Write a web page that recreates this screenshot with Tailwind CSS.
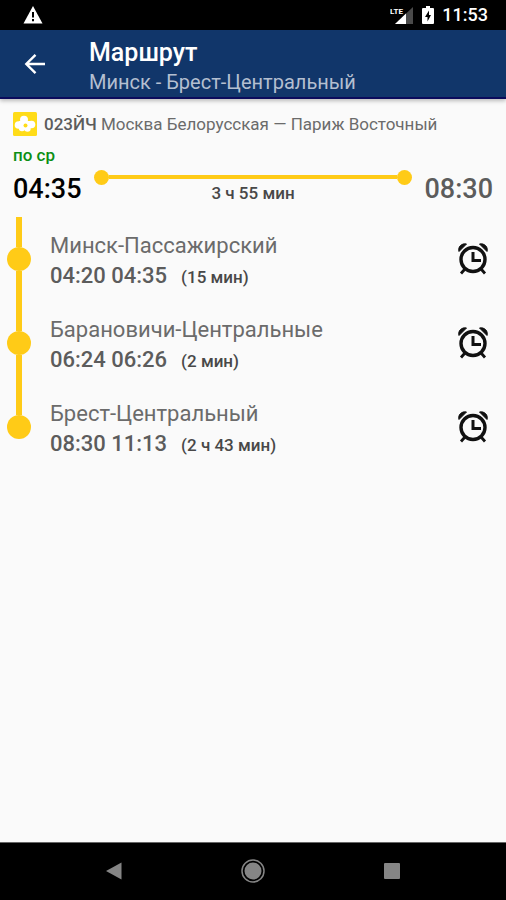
<!DOCTYPE html>
<html lang="ru">

<head>
  <meta charset="UTF-8">
  <meta name="viewport" content="width=device-width, initial-scale=1.0">
  <title>Маршрут</title>
  <script src="https://cdn.jsdelivr.net/npm/@tailwindcss/browser@4"></script>
</head>

<body class="min-h-screen flex flex-col bg-[#fafafa] font-[Roboto,sans-serif] text-[#5c5c5c]">
  <!-- Status bar -->
  <div class="h-[30px] bg-black text-white flex items-center pl-[23px] pr-[18px]">
    <svg class="w-5 h-[18px]" viewBox="0 0 20 18" aria-hidden="true">
      <path d="M10 0L19.500 17.500H.5z" fill="#fff" />
      <path d="M9 6h2v5.500H9zM9 13h2v2.200H9z" fill="#000" />
    </svg>
    <div class="ml-auto flex items-center">
      <svg class="w-6 h-5" viewBox="0 0 24 20" aria-label="LTE">
        <path d="M23 2V19H5z" fill="#4a4a4a" />
        <path d="M16 8.600V19H5z" fill="#fff" />
        <text x="0" y="9" font-size="8" font-weight="700" fill="#fff" stroke="#000" stroke-width="2" paint-order="stroke">LTE</text>
      </svg>
      <svg class="w-3 h-5 ml-2" viewBox="0 0 12 20" aria-hidden="true">
        <path d="M4 1h4v2h3a1 1 0 0 1 1 1v14a1 1 0 0 1-1 1H1a1 1 0 0 1-1-1V4a1 1 0 0 1 1-1h3z" fill="#fff" />
        <path d="M7 5.500L3 12h2.500v4.500L9 10H7z" fill="#000" />
      </svg>
      <span class="ml-2 text-lg leading-[30px] font-medium">11:53</span>
    </div>
  </div>

  <!-- App bar -->
  <header class="relative h-[69px] bg-[#11366a] border-b-2 border-[#0b0b5c] shadow-[0_2px_4px_rgba(0,0,0,0.25)] flex items-center pl-6">
    <button type="button" aria-label="Назад" class="mr-[43px]">
      <svg class="block w-[22px] h-[22px]" viewBox="0 0 22 22" fill="none" stroke="#fff" stroke-width="2.400">
        <path d="M21 11H3M11.500 1.800L2.300 11l9.200 9.200" />
      </svg>
    </button>
    <div class="pt-1.5">
      <h1 class="text-[25px] leading-[30px] font-medium text-white">Маршрут</h1>
      <p class="text-xl leading-7 text-[#b4bfd0]">Минск - Брест-Центральный</p>
    </div>
  </header>

  <main class="flex-1">
    <!-- Train summary -->
    <section class="px-[13px] pt-[13px]">
      <div class="flex items-center h-6">
        <svg class="w-6 h-6 mr-[7px]" viewBox="0 0 24 24" aria-hidden="true">
          <rect width="24" height="24" rx="1.500" fill="#ffdc18" />
          <g fill="#fff">
            <circle cx="11" cy="7.800" r="4" />
            <circle cx="5.500" cy="13" r="3.800" />
            <circle cx="18.500" cy="12.500" r="3.800" />
            <circle cx="9" cy="16" r="3.200" />
            <circle cx="14.500" cy="16.500" r="3.200" />
            <path d="M6 9h11v7H6z" />
          </g>
          <circle cx="12.500" cy="13.500" r="2" fill="#ffdc18" />
        </svg>
        <p class="text-[17px] leading-6 whitespace-nowrap text-[#6b6b6b]"><span class="font-medium text-[#5c5c5c]">023ЙЧ</span> Москва Белорусская — Париж Восточный</p>
      </div>
      <p class="mt-[7px] text-[17px] leading-6 font-medium text-[#0b8f14]">по ср</p>
      <div class="flex items-start pt-0.5">
        <time class="text-[27px] leading-10 font-medium text-black">04:35</time>
        <div class="flex-1 mx-3">
          <div class="flex items-center h-4">
            <span class="w-[15px] h-[15px] rounded-full bg-[#ffcb17]"></span>
            <span class="flex-1 h-1 bg-[#ffcb17]"></span>
            <span class="w-[15px] h-[15px] rounded-full bg-[#ffcb17]"></span>
          </div>
          <p class="text-center text-[17px] leading-4 font-medium text-[#484848]">3 ч 55 мин</p>
        </div>
        <time class="text-[27px] leading-10 font-medium">08:30</time>
      </div>
    </section>

    <!-- Stops -->
    <ul id="stops" class="mt-2"></ul>
  </main>

  <!-- Navigation bar -->
  <nav class="h-[58px] bg-black border-t border-[#666] pb-0.5 grid grid-cols-3 items-center justify-items-center px-11">
    <button type="button" aria-label="Назад">
      <svg class="block w-4 h-[18px]" viewBox="0 0 16 18"><path d="M15.500 .5V17.500L0 9z" fill="#858585" /></svg>
    </button>
    <button type="button" aria-label="Домой">
      <svg class="block w-6 h-6" viewBox="0 0 24 24">
        <circle cx="12" cy="12" r="11" fill="none" stroke="#858585" stroke-width="1.500" />
        <circle cx="12" cy="12" r="8.500" fill="#858585" />
      </svg>
    </button>
    <button type="button" aria-label="Обзор">
      <svg class="block w-4 h-4" viewBox="0 0 16 16"><rect width="16" height="16" rx="1" fill="#858585" /></svg>
    </button>
  </nav>

  <script>
    const stops = [
      { name: 'Минск-Пассажирский', arrival: '04:20', departure: '04:35', wait: '15 мин' },
      { name: 'Барановичи-Центральные', arrival: '06:24', departure: '06:26', wait: '2 мин' },
      { name: 'Брест-Центральный', arrival: '08:30', departure: '11:13', wait: '2 ч 43 мин' }
    ];

    document.getElementById('stops').innerHTML = stops.map((stop) => `
      <li class="group flex items-center h-[84px] pl-[7px] pr-[18px]">
        <div class="self-stretch w-6 mr-[19px] flex flex-col items-center">
          <span class="w-1.5 flex-1 bg-[#ffcb17]"></span>
          <span class="w-6 h-6 rounded-full bg-[#ffcb17]"></span>
          <span class="w-1.5 flex-1 bg-[#ffcb17] group-last:invisible"></span>
        </div>
        <div class="flex-1 pt-1">
          <h2 class="text-[22px] leading-[30px] text-[#6b6b6b]">${stop.name}</h2>
          <p class="text-[22px] leading-[30px] font-medium">${stop.arrival} ${stop.departure}<span class="ml-3.5 text-[17px] text-[#484848]">(${stop.wait})</span></p>
        </div>
        <button type="button" aria-label="Напомнить: ${stop.name}">
          <svg class="block w-[30px] h-8" viewBox="0 0 30 32" fill="none" stroke="#111">
            <circle cx="15" cy="16.500" r="12" stroke-width="3.400" />
            <path d="M15 9v8.500h8" stroke-width="3" />
            <path d="M6.500 26.500l-3.500 4M23.500 26.500l3.500 4" stroke-width="2.800" />
            <path d="M1 8.500C-.4 4 3.500 0 8.500 1zM29 8.500C30.400 4 26.500 0 21.500 1z" fill="#111" stroke="#111" />
          </svg>
        </button>
      </li>
    `).join('');
  </script>
</body>

</html>
